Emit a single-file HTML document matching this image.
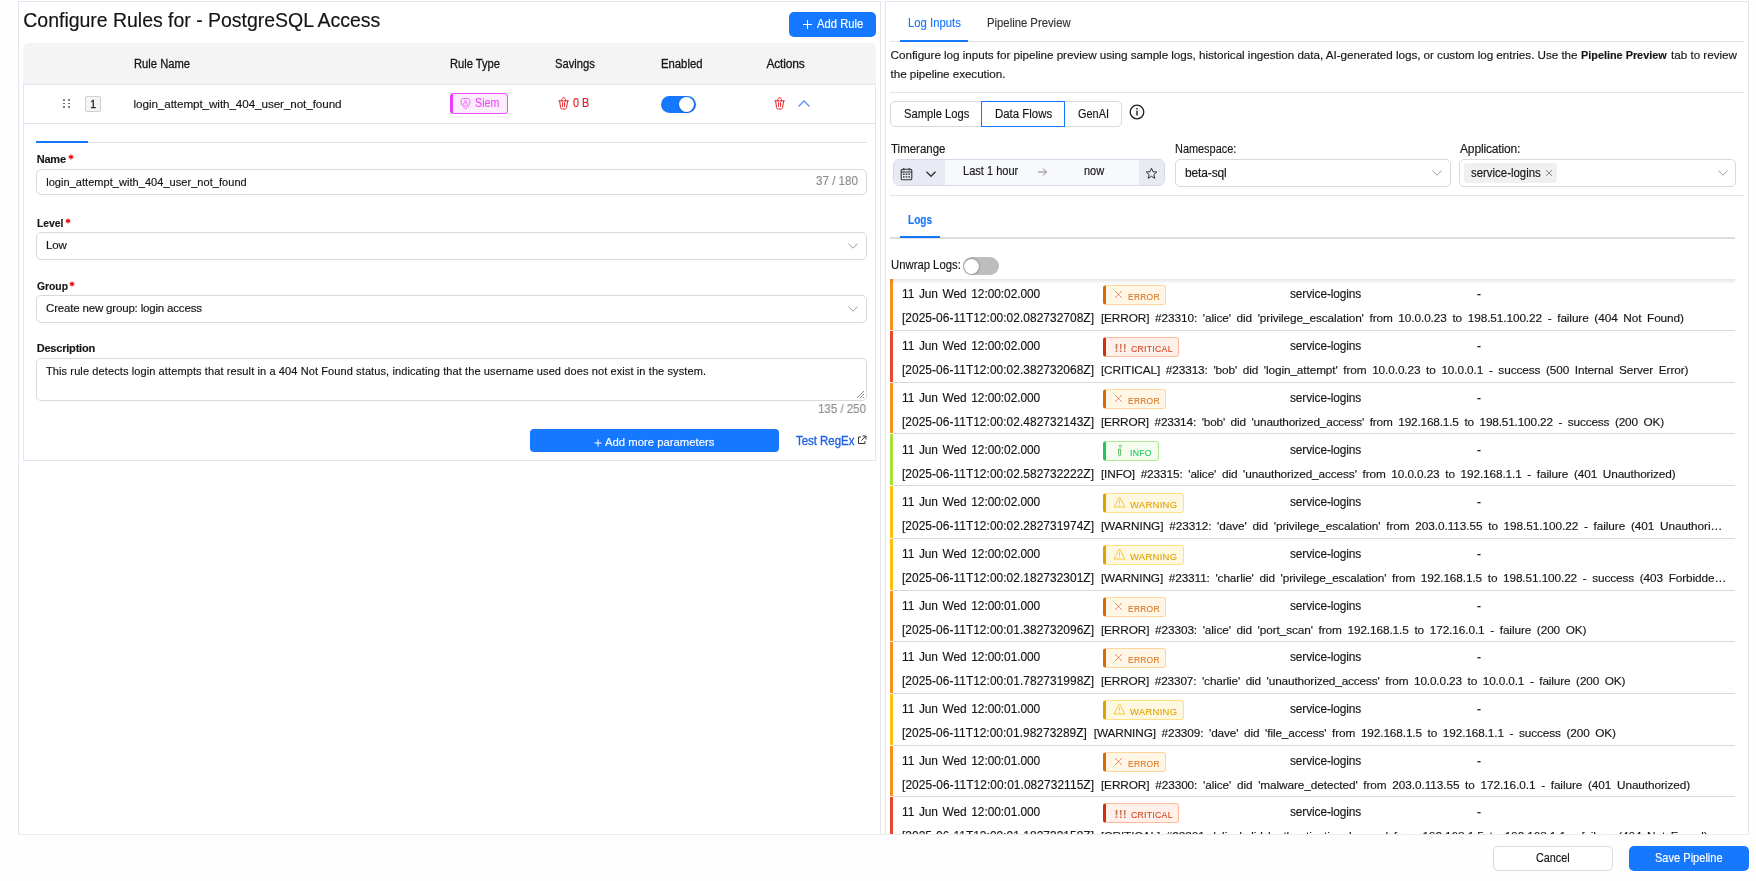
<!DOCTYPE html>
<html><head><meta charset="utf-8"><style>
html,body{margin:0;padding:0;}
body{width:1756px;height:881px;position:relative;overflow:hidden;background:#fefefe;font-family:"Liberation Sans", sans-serif;}
.tx{position:absolute;line-height:1;white-space:nowrap;-webkit-text-stroke:0.15px currentColor;}
.bp{display:inline-block;width:0;height:0;vertical-align:baseline;}
</style></head><body><div id="root" style="position:absolute;left:0;top:0;width:1756px;height:881px;overflow:hidden;will-change:transform"><div style="position:absolute;left:18px;top:1px;width:863px;height:834px;border:1px solid #e2e5ee;border-bottom:0;box-sizing:border-box;background:#fff"></div><div style="position:absolute;left:789px;top:12px;width:87px;height:25px;border-radius:5px;background:#1677ff"></div><svg style="position:absolute;left:802px;top:19px" width="11" height="11" viewBox="0 0 11 11"><path d="M5.5 1 V10 M1 5.5 H10" stroke="#fff" stroke-width="1.1"/></svg><div style="position:absolute;left:23px;top:43px;width:853px;height:41px;border-radius:6px 6px 0 0;background:#f4f4f4"></div><div style="position:absolute;left:23px;top:84px;width:853px;height:377px;border:1px solid #e2e6f0;box-sizing:border-box;"></div><div style="position:absolute;left:23px;top:123px;width:853px;height:1px;background:#e2e6f0"></div><div style="position:absolute;left:63.2px;top:99.2px;width:1.6px;height:1.6px;background:#555;border-radius:1px"></div><div style="position:absolute;left:63.2px;top:102.7px;width:1.6px;height:1.6px;background:#555;border-radius:1px"></div><div style="position:absolute;left:63.2px;top:106.2px;width:1.6px;height:1.6px;background:#555;border-radius:1px"></div><div style="position:absolute;left:68.2px;top:99.2px;width:1.6px;height:1.6px;background:#555;border-radius:1px"></div><div style="position:absolute;left:68.2px;top:102.7px;width:1.6px;height:1.6px;background:#555;border-radius:1px"></div><div style="position:absolute;left:68.2px;top:106.2px;width:1.6px;height:1.6px;background:#555;border-radius:1px"></div><div style="position:absolute;left:85px;top:96px;width:16px;height:15.5px;border:1px solid #cfcfcf;border-radius:2px;background:#f5f5f5;box-sizing:border-box"></div><div style="position:absolute;left:450px;top:93px;width:58px;height:21px;border:1px solid #f04cff;border-left:3px solid #ea3cfb;border-radius:3.5px;background:#fdeeff;box-sizing:border-box"></div><svg style="position:absolute;left:459px;top:97px" width="13" height="13" viewBox="0 0 13 13"><path d="M3.3 1.5 H9.7 L11 3.4 L10.6 7.8 L6.5 11.8 L2.4 7.8 L2 3.4 Z" fill="none" stroke="#f06bff" stroke-width="1" stroke-linejoin="round"/><circle cx="6.5" cy="4.5" r="1.1" fill="none" stroke="#f06bff" stroke-width="0.9"/><rect x="4.6" y="5.8" width="3.8" height="3" rx="0.6" fill="none" stroke="#f06bff" stroke-width="0.9"/></svg><svg style="position:absolute;left:557.5px;top:96.8px" width="12" height="13" viewBox="0 0 12 13"><path d="M0.8 3.9 H10.4 M3.6 3.9 C3.6 1.6 4.5 0.7 5.6 0.7 C6.7 0.7 7.6 1.6 7.6 3.9 M1.6 4 L2.6 10.6 C2.8 11.6 3.6 12.1 4.4 12.1 H6.8 C7.6 12.1 8.4 11.6 8.6 10.6 L9.6 4 M4.6 5.6 V9.4 M6.6 5.6 V9.4" fill="none" stroke="#e8141e" stroke-width="0.95" stroke-linecap="round"/></svg><div style="position:absolute;left:661px;top:96px;width:35px;height:17px;border-radius:9px;background:#1677ff"></div><div style="position:absolute;left:679px;top:97px;width:15px;height:15px;border-radius:50%;background:#fff;box-shadow:0 1px 2px rgba(0,0,0,.25)"></div><svg style="position:absolute;left:773.5px;top:96.8px" width="12" height="13" viewBox="0 0 12 13"><path d="M0.8 3.9 H10.4 M3.6 3.9 C3.6 1.6 4.5 0.7 5.6 0.7 C6.7 0.7 7.6 1.6 7.6 3.9 M1.6 4 L2.6 10.6 C2.8 11.6 3.6 12.1 4.4 12.1 H6.8 C7.6 12.1 8.4 11.6 8.6 10.6 L9.6 4 M4.6 5.6 V9.4 M6.6 5.6 V9.4" fill="none" stroke="#e8141e" stroke-width="0.95" stroke-linecap="round"/></svg><svg style="position:absolute;left:797px;top:98px" width="14" height="10" viewBox="0 0 14 10"><path d="M1.5 8.5 L7 3 L12.5 8.5" fill="none" stroke="#5b8ff9" stroke-width="1.4"/></svg><div style="position:absolute;left:36px;top:142px;width:831px;height:1px;background:#e0e0e0"></div><div style="position:absolute;left:36px;top:141px;width:52px;height:2px;background:#1677ff"></div><svg style="position:absolute;left:67.5px;top:153.7px" width="6" height="6" viewBox="0 0 6 6"><path d="M3 0.4 V5.6 M0.75 1.7 L5.25 4.3 M5.25 1.7 L0.75 4.3" stroke="#e60000" stroke-width="1.1"/></svg><div style="position:absolute;left:36px;top:169px;width:831px;height:26px;border:1px solid #d9d9d9;border-radius:5px;box-sizing:border-box"></div><svg style="position:absolute;left:64.7px;top:217.7px" width="6" height="6" viewBox="0 0 6 6"><path d="M3 0.4 V5.6 M0.75 1.7 L5.25 4.3 M5.25 1.7 L0.75 4.3" stroke="#e60000" stroke-width="1.1"/></svg><div style="position:absolute;left:36px;top:232px;width:831px;height:28px;border:1px solid #d9d9d9;border-radius:5px;box-sizing:border-box"></div><svg style="position:absolute;left:847px;top:242px" width="12" height="8" viewBox="0 0 12 8"><path d="M1.5 1.8 L6 6.2 L10.5 1.8" fill="none" stroke="#9a9a9a" stroke-width="1"/></svg><svg style="position:absolute;left:69.2px;top:280.8px" width="6" height="6" viewBox="0 0 6 6"><path d="M3 0.4 V5.6 M0.75 1.7 L5.25 4.3 M5.25 1.7 L0.75 4.3" stroke="#e60000" stroke-width="1.1"/></svg><div style="position:absolute;left:36px;top:295px;width:831px;height:28px;border:1px solid #d9d9d9;border-radius:5px;box-sizing:border-box"></div><svg style="position:absolute;left:847px;top:305px" width="12" height="8" viewBox="0 0 12 8"><path d="M1.5 1.8 L6 6.2 L10.5 1.8" fill="none" stroke="#9a9a9a" stroke-width="1"/></svg><div style="position:absolute;left:36px;top:358px;width:831px;height:43px;border:1px solid #d9d9d9;border-radius:5px;box-sizing:border-box"></div><svg style="position:absolute;left:855px;top:389px" width="10" height="10" viewBox="0 0 10 10"><path d="M9 2 L2 9 M9 5 L5 9 M9 8 L8 9" stroke="#777" stroke-width="0.9"/></svg><div style="position:absolute;left:530px;top:429px;width:249px;height:23px;border-radius:4px;background:#1677ff"></div><svg style="position:absolute;left:594px;top:439px" width="8" height="8" viewBox="0 0 8 8"><path d="M4 0.5 V7.5 M0.5 4 H7.5" stroke="#fff" stroke-width="1"/></svg><svg style="position:absolute;left:857px;top:435px" width="10" height="10" viewBox="0 0 10 10"><path d="M4 2 H1.5 V8.5 H8 V6 M5.5 1 H9 V4.5 M9 1 L4.5 5.5" fill="none" stroke="#333" stroke-width="1"/></svg><div style="position:absolute;left:885px;top:1px;width:864px;height:834px;border:1px solid #e2e5ee;border-bottom:0;box-sizing:border-box;background:#fff"></div><div style="position:absolute;left:890px;top:41px;width:854px;height:1px;background:#e0e0e0"></div><div style="position:absolute;left:900px;top:40px;width:68px;height:2px;background:#1677ff"></div><div style="position:absolute;left:890px;top:92px;width:854px;height:1px;background:#e3e3e3"></div><div style="position:absolute;left:890px;top:101px;width:232px;height:26px;border:1px solid #d9d9d9;border-radius:5px;box-sizing:border-box"></div><div style="position:absolute;left:981px;top:101px;width:84px;height:26px;border:1px solid #1677ff;box-sizing:border-box"></div><svg style="position:absolute;left:1129px;top:104px" width="16" height="16" viewBox="0 0 16 16"><circle cx="8" cy="8" r="6.8" fill="none" stroke="#1f1f1f" stroke-width="1.3"/><rect x="7.3" y="6.6" width="1.4" height="5" fill="#1f1f1f"/><circle cx="8" cy="4.6" r="0.85" fill="#1f1f1f"/></svg><div style="position:absolute;left:893px;top:159px;width:272px;height:27px;border:1px solid #d3d9e6;border-radius:6px;box-sizing:border-box;background:#f8f9fc;overflow:hidden"><div style="position:absolute;left:0;top:0;width:51px;height:25px;background:#e8ebf3"></div><div style="position:absolute;left:245px;top:0;width:26px;height:25px;background:#e8ebf3"></div></div><svg style="position:absolute;left:900px;top:167px" width="13" height="14" viewBox="0 0 13 14"><rect x="1.2" y="2.2" width="10.6" height="10.6" rx="1.2" fill="none" stroke="#333" stroke-width="1.1"/><path d="M1.2 5 H11.8 M3.8 1 V3.4 M9.2 1 V3.4" stroke="#333" stroke-width="1.1"/><g fill="#333"><rect x="3" y="6.5" width="1.6" height="1.4"/><rect x="5.7" y="6.5" width="1.6" height="1.4"/><rect x="8.4" y="6.5" width="1.6" height="1.4"/><rect x="3" y="9.2" width="1.6" height="1.4"/><rect x="5.7" y="9.2" width="1.6" height="1.4"/><rect x="8.4" y="9.2" width="1.6" height="1.4"/></g></svg><svg style="position:absolute;left:925px;top:169.5px" width="12" height="8" viewBox="0 0 12 8"><path d="M1.5 1.8 L6 6.2 L10.5 1.8" fill="none" stroke="#333" stroke-width="1.4"/></svg><svg style="position:absolute;left:1037px;top:167px" width="11" height="10" viewBox="0 0 11 10"><path d="M1 5 H9.5 M6 1.5 L9.5 5 L6 8.5" fill="none" stroke="#888" stroke-width="1"/></svg><svg style="position:absolute;left:1145px;top:167px" width="13" height="13" viewBox="0 0 13 13"><path d="M6.5 1.2 L8 4.7 L11.8 5 L8.9 7.5 L9.8 11.3 L6.5 9.3 L3.2 11.3 L4.1 7.5 L1.2 5 L5 4.7 Z" fill="none" stroke="#333" stroke-width="1" stroke-linejoin="round"/></svg><div style="position:absolute;left:1175px;top:159px;width:276px;height:28px;border:1px solid #d9d9d9;border-radius:5px;box-sizing:border-box"></div><svg style="position:absolute;left:1431px;top:169px" width="12" height="8" viewBox="0 0 12 8"><path d="M1.5 1.8 L6 6.2 L10.5 1.8" fill="none" stroke="#9a9a9a" stroke-width="1"/></svg><div style="position:absolute;left:1459px;top:159px;width:277px;height:28px;border:1px solid #d9d9d9;border-radius:5px;box-sizing:border-box"></div><div style="position:absolute;left:1464px;top:163px;width:93px;height:20px;border-radius:3px;background:#f0f0f0"></div><svg style="position:absolute;left:1545px;top:169px" width="8" height="8" viewBox="0 0 8 8"><path d="M1 1 L7 7 M7 1 L1 7" stroke="#8c8c8c" stroke-width="1"/></svg><svg style="position:absolute;left:1716.5px;top:169px" width="12" height="8" viewBox="0 0 12 8"><path d="M1.5 1.8 L6 6.2 L10.5 1.8" fill="none" stroke="#9a9a9a" stroke-width="1"/></svg><div style="position:absolute;left:890px;top:195px;width:854px;height:1px;background:#e3e3e3"></div><div style="position:absolute;left:890px;top:237px;width:845px;height:1.5px;background:#dcdcdc"></div><div style="position:absolute;left:900px;top:236px;width:40px;height:2px;background:#1677ff"></div><div style="position:absolute;left:963px;top:257px;width:36px;height:18px;border-radius:9px;background:#bdbdbd"></div><div style="position:absolute;left:964px;top:258.5px;width:15px;height:15px;border-radius:50%;background:#fff;box-shadow:0 0 1.5px 0.5px rgba(0,0,0,.35)"></div><div style="position:absolute;left:890px;top:279px;width:845px;height:555px;overflow:hidden"><div style="position:absolute;left:0;top:0px;width:3px;height:51px;background:#fb8c1e"></div><div style="position:absolute;left:3px;top:51px;width:842px;height:1px;background:#d9d9d9"></div><div style="position:absolute;left:213px;top:6px;width:63px;height:19.5px;border:1px solid #ffd59a;border-left:3px solid #d96a0a;border-radius:3px;background:#fff6e6;box-sizing:border-box"></div><svg style="position:absolute;left:224px;top:11px" width="9" height="9" viewBox="0 0 9 9"><path d="M1 1 L8 8 M8 1 L1 8" stroke="#f08050" stroke-width="0.9"/></svg><div style="position:absolute;left:0;top:52px;width:3px;height:51px;background:#e5482a"></div><div style="position:absolute;left:3px;top:103px;width:842px;height:1px;background:#d9d9d9"></div><div style="position:absolute;left:213px;top:58px;width:76px;height:19.5px;border:1px solid #ffb79b;border-left:3px solid #d32f0f;border-radius:3px;background:#fff0ea;box-sizing:border-box"></div><div style="position:absolute;left:0;top:104px;width:3px;height:50px;background:#fb8c1e"></div><div style="position:absolute;left:3px;top:154px;width:842px;height:1px;background:#d9d9d9"></div><div style="position:absolute;left:213px;top:110px;width:63px;height:19.5px;border:1px solid #ffd59a;border-left:3px solid #d96a0a;border-radius:3px;background:#fff6e6;box-sizing:border-box"></div><svg style="position:absolute;left:224px;top:115px" width="9" height="9" viewBox="0 0 9 9"><path d="M1 1 L8 8 M8 1 L1 8" stroke="#f08050" stroke-width="0.9"/></svg><div style="position:absolute;left:0;top:155px;width:3px;height:51px;background:#a8e03a"></div><div style="position:absolute;left:3px;top:206px;width:842px;height:1px;background:#d9d9d9"></div><div style="position:absolute;left:213px;top:162px;width:56px;height:19.5px;border:1px solid #aeea94;border-left:3px solid #22c55e;border-radius:3px;background:#f4fdf0;box-sizing:border-box"></div><svg style="position:absolute;left:225px;top:164px" width="9" height="14" viewBox="0 0 9 14"><circle cx="5.4" cy="3.2" r="1.1" fill="none" stroke="#6cc070" stroke-width="0.9"/><path d="M3.2 6.2 H5.6 V11.8 C5.6 12.5 5.1 12.8 4.6 12.8 C4 12.8 3.6 12.4 3.6 11.8 V6.4" fill="none" stroke="#5cb860" stroke-width="1"/></svg><div style="position:absolute;left:0;top:207px;width:3px;height:52px;background:#ffc107"></div><div style="position:absolute;left:3px;top:259px;width:842px;height:1px;background:#d9d9d9"></div><div style="position:absolute;left:213px;top:214px;width:81px;height:19.5px;border:1px solid #ffe08a;border-left:3px solid #e0a000;border-radius:3px;background:#fff8e1;box-sizing:border-box"></div><svg style="position:absolute;left:223px;top:217px" width="13" height="12" viewBox="0 0 13 12"><path d="M6.5 1 L12 11 H1 Z" fill="none" stroke="#f5c842" stroke-width="1" stroke-linejoin="round"/><path d="M6.5 4.2 V7.6" stroke="#f5c842" stroke-width="1"/><circle cx="6.5" cy="9.2" r="0.6" fill="#f5c842"/></svg><div style="position:absolute;left:0;top:260px;width:3px;height:51px;background:#ffc107"></div><div style="position:absolute;left:3px;top:311px;width:842px;height:1px;background:#d9d9d9"></div><div style="position:absolute;left:213px;top:266px;width:81px;height:19.5px;border:1px solid #ffe08a;border-left:3px solid #e0a000;border-radius:3px;background:#fff8e1;box-sizing:border-box"></div><svg style="position:absolute;left:223px;top:269px" width="13" height="12" viewBox="0 0 13 12"><path d="M6.5 1 L12 11 H1 Z" fill="none" stroke="#f5c842" stroke-width="1" stroke-linejoin="round"/><path d="M6.5 4.2 V7.6" stroke="#f5c842" stroke-width="1"/><circle cx="6.5" cy="9.2" r="0.6" fill="#f5c842"/></svg><div style="position:absolute;left:0;top:312px;width:3px;height:50px;background:#fb8c1e"></div><div style="position:absolute;left:3px;top:362px;width:842px;height:1px;background:#d9d9d9"></div><div style="position:absolute;left:213px;top:318px;width:63px;height:19.5px;border:1px solid #ffd59a;border-left:3px solid #d96a0a;border-radius:3px;background:#fff6e6;box-sizing:border-box"></div><svg style="position:absolute;left:224px;top:323px" width="9" height="9" viewBox="0 0 9 9"><path d="M1 1 L8 8 M8 1 L1 8" stroke="#f08050" stroke-width="0.9"/></svg><div style="position:absolute;left:0;top:363px;width:3px;height:51px;background:#fb8c1e"></div><div style="position:absolute;left:3px;top:414px;width:842px;height:1px;background:#d9d9d9"></div><div style="position:absolute;left:213px;top:369px;width:63px;height:19.5px;border:1px solid #ffd59a;border-left:3px solid #d96a0a;border-radius:3px;background:#fff6e6;box-sizing:border-box"></div><svg style="position:absolute;left:224px;top:374px" width="9" height="9" viewBox="0 0 9 9"><path d="M1 1 L8 8 M8 1 L1 8" stroke="#f08050" stroke-width="0.9"/></svg><div style="position:absolute;left:0;top:415px;width:3px;height:51px;background:#ffc107"></div><div style="position:absolute;left:3px;top:466px;width:842px;height:1px;background:#d9d9d9"></div><div style="position:absolute;left:213px;top:421px;width:81px;height:19.5px;border:1px solid #ffe08a;border-left:3px solid #e0a000;border-radius:3px;background:#fff8e1;box-sizing:border-box"></div><svg style="position:absolute;left:223px;top:424px" width="13" height="12" viewBox="0 0 13 12"><path d="M6.5 1 L12 11 H1 Z" fill="none" stroke="#f5c842" stroke-width="1" stroke-linejoin="round"/><path d="M6.5 4.2 V7.6" stroke="#f5c842" stroke-width="1"/><circle cx="6.5" cy="9.2" r="0.6" fill="#f5c842"/></svg><div style="position:absolute;left:0;top:467px;width:3px;height:50px;background:#fb8c1e"></div><div style="position:absolute;left:3px;top:517px;width:842px;height:1px;background:#d9d9d9"></div><div style="position:absolute;left:213px;top:473px;width:63px;height:19.5px;border:1px solid #ffd59a;border-left:3px solid #d96a0a;border-radius:3px;background:#fff6e6;box-sizing:border-box"></div><svg style="position:absolute;left:224px;top:478px" width="9" height="9" viewBox="0 0 9 9"><path d="M1 1 L8 8 M8 1 L1 8" stroke="#f08050" stroke-width="0.9"/></svg><div style="position:absolute;left:0;top:518px;width:3px;height:51px;background:#e5482a"></div><div style="position:absolute;left:3px;top:569px;width:842px;height:1px;background:#d9d9d9"></div><div style="position:absolute;left:213px;top:524px;width:76px;height:19.5px;border:1px solid #ffb79b;border-left:3px solid #d32f0f;border-radius:3px;background:#fff0ea;box-sizing:border-box"></div><div class="tx" id="t41" style="left:12.00px;top:10.00px;font-size:11.9px;font-weight:400;color:#161616;letter-spacing:-0.050px;word-spacing:1.4px;"><span class="bp" id="p41"></span>11 Jun Wed 12:00:02.000</div><div class="tx" id="t42" style="left:237.50px;top:13.01px;font-size:9.6px;font-weight:400;color:#dc7420;letter-spacing:0.300px;word-spacing:0px;transform:scaleX(0.8795);transform-origin:0 0;-webkit-text-stroke:0.1px #dc7420;"><span class="bp" id="p42"></span>ERROR</div><div class="tx" id="t43" style="left:400.00px;top:10.01px;font-size:11.9px;font-weight:400;color:#161616;letter-spacing:-0.108px;word-spacing:0px;"><span class="bp" id="p43"></span>service-logins</div><div class="tx" id="t44" style="left:587.00px;top:9.02px;font-size:12px;font-weight:400;color:#161616;letter-spacing:0.000px;word-spacing:0px;"><span class="bp" id="p44"></span>-</div><div class="tx" id="t45" style="left:12.00px;top:34.00px;font-size:11.9px;font-weight:400;color:#161616;letter-spacing:0.058px;word-spacing:0px;"><span class="bp" id="p45"></span>[2025-06-11T12:00:02.082732708Z]</div><div class="tx" id="t46" style="left:210.90px;top:34.01px;font-size:11.8px;font-weight:400;color:#161616;letter-spacing:-0.093px;word-spacing:2.5px;"><span class="bp" id="p46"></span>[ERROR] #23310: &#x27;alice&#x27; did &#x27;privilege_escalation&#x27; from 10.0.0.23 to 198.51.100.22 - failure (404 Not Found)</div><div class="tx" id="t47" style="left:12.00px;top:62.00px;font-size:11.9px;font-weight:400;color:#161616;letter-spacing:-0.050px;word-spacing:1.4px;"><span class="bp" id="p47"></span>11 Jun Wed 12:00:02.000</div><div class="tx" id="t48" style="left:224.80px;top:64.00px;font-size:10.5px;font-weight:700;color:#c9785f;letter-spacing:0.600px;word-spacing:0px;"><span class="bp" id="p48"></span>!!!</div><div class="tx" id="t49" style="left:240.90px;top:65.01px;font-size:9.6px;font-weight:400;color:#d8451b;letter-spacing:0.300px;word-spacing:0px;transform:scaleX(0.9062);transform-origin:0 0;-webkit-text-stroke:0.1px #d8451b;"><span class="bp" id="p49"></span>CRITICAL</div><div class="tx" id="t50" style="left:400.00px;top:62.01px;font-size:11.9px;font-weight:400;color:#161616;letter-spacing:-0.108px;word-spacing:0px;"><span class="bp" id="p50"></span>service-logins</div><div class="tx" id="t51" style="left:587.00px;top:61.02px;font-size:12px;font-weight:400;color:#161616;letter-spacing:0.000px;word-spacing:0px;"><span class="bp" id="p51"></span>-</div><div class="tx" id="t52" style="left:12.00px;top:86.00px;font-size:11.9px;font-weight:400;color:#161616;letter-spacing:0.058px;word-spacing:0px;"><span class="bp" id="p52"></span>[2025-06-11T12:00:02.382732068Z]</div><div class="tx" id="t53" style="left:210.90px;top:86.01px;font-size:11.8px;font-weight:400;color:#161616;letter-spacing:-0.104px;word-spacing:2.5px;"><span class="bp" id="p53"></span>[CRITICAL] #23313: &#x27;bob&#x27; did &#x27;login_attempt&#x27; from 10.0.0.23 to 10.0.0.1 - success (500 Internal Server Error)</div><div class="tx" id="t54" style="left:12.00px;top:114.00px;font-size:11.9px;font-weight:400;color:#161616;letter-spacing:-0.050px;word-spacing:1.4px;"><span class="bp" id="p54"></span>11 Jun Wed 12:00:02.000</div><div class="tx" id="t55" style="left:237.50px;top:117.01px;font-size:9.6px;font-weight:400;color:#dc7420;letter-spacing:0.300px;word-spacing:0px;transform:scaleX(0.8795);transform-origin:0 0;-webkit-text-stroke:0.1px #dc7420;"><span class="bp" id="p55"></span>ERROR</div><div class="tx" id="t56" style="left:400.00px;top:114.01px;font-size:11.9px;font-weight:400;color:#161616;letter-spacing:-0.108px;word-spacing:0px;"><span class="bp" id="p56"></span>service-logins</div><div class="tx" id="t57" style="left:587.00px;top:113.02px;font-size:12px;font-weight:400;color:#161616;letter-spacing:0.000px;word-spacing:0px;"><span class="bp" id="p57"></span>-</div><div class="tx" id="t58" style="left:12.00px;top:138.00px;font-size:11.9px;font-weight:400;color:#161616;letter-spacing:0.058px;word-spacing:0px;"><span class="bp" id="p58"></span>[2025-06-11T12:00:02.482732143Z]</div><div class="tx" id="t59" style="left:210.90px;top:138.01px;font-size:11.8px;font-weight:400;color:#161616;letter-spacing:-0.163px;word-spacing:2.5px;"><span class="bp" id="p59"></span>[ERROR] #23314: &#x27;bob&#x27; did &#x27;unauthorized_access&#x27; from 192.168.1.5 to 198.51.100.22 - success (200 OK)</div><div class="tx" id="t60" style="left:12.00px;top:166.00px;font-size:11.9px;font-weight:400;color:#161616;letter-spacing:-0.050px;word-spacing:1.4px;"><span class="bp" id="p60"></span>11 Jun Wed 12:00:02.000</div><div class="tx" id="t61" style="left:240.00px;top:169.01px;font-size:9.6px;font-weight:400;color:#22c55e;letter-spacing:0.300px;word-spacing:0px;transform:scaleX(0.9036);transform-origin:0 0;-webkit-text-stroke:0.1px #22c55e;"><span class="bp" id="p61"></span>INFO</div><div class="tx" id="t62" style="left:400.00px;top:166.01px;font-size:11.9px;font-weight:400;color:#161616;letter-spacing:-0.108px;word-spacing:0px;"><span class="bp" id="p62"></span>service-logins</div><div class="tx" id="t63" style="left:587.00px;top:165.02px;font-size:12px;font-weight:400;color:#161616;letter-spacing:0.000px;word-spacing:0px;"><span class="bp" id="p63"></span>-</div><div class="tx" id="t64" style="left:12.00px;top:190.00px;font-size:11.9px;font-weight:400;color:#161616;letter-spacing:0.058px;word-spacing:0px;"><span class="bp" id="p64"></span>[2025-06-11T12:00:02.582732222Z]</div><div class="tx" id="t65" style="left:210.90px;top:190.01px;font-size:11.8px;font-weight:400;color:#161616;letter-spacing:-0.106px;word-spacing:2.5px;"><span class="bp" id="p65"></span>[INFO] #23315: &#x27;alice&#x27; did &#x27;unauthorized_access&#x27; from 10.0.0.23 to 192.168.1.1 - failure (401 Unauthorized)</div><div class="tx" id="t66" style="left:12.00px;top:218.00px;font-size:11.9px;font-weight:400;color:#161616;letter-spacing:-0.050px;word-spacing:1.4px;"><span class="bp" id="p66"></span>11 Jun Wed 12:00:02.000</div><div class="tx" id="t67" style="left:240.00px;top:221.01px;font-size:9.6px;font-weight:400;color:#e0a200;letter-spacing:0.300px;word-spacing:0px;transform:scaleX(0.9849);transform-origin:0 0;-webkit-text-stroke:0.1px #e0a200;"><span class="bp" id="p67"></span>WARNING</div><div class="tx" id="t68" style="left:400.00px;top:218.01px;font-size:11.9px;font-weight:400;color:#161616;letter-spacing:-0.108px;word-spacing:0px;"><span class="bp" id="p68"></span>service-logins</div><div class="tx" id="t69" style="left:587.00px;top:217.02px;font-size:12px;font-weight:400;color:#161616;letter-spacing:0.000px;word-spacing:0px;"><span class="bp" id="p69"></span>-</div><div class="tx" id="t70" style="left:12.00px;top:242.00px;font-size:11.9px;font-weight:400;color:#161616;letter-spacing:0.058px;word-spacing:0px;"><span class="bp" id="p70"></span>[2025-06-11T12:00:02.282731974Z]</div><div class="tx" id="t71" style="left:210.90px;top:242.01px;font-size:11.8px;font-weight:400;color:#161616;letter-spacing:-0.064px;word-spacing:2.5px;"><span class="bp" id="p71"></span>[WARNING] #23312: &#x27;dave&#x27; did &#x27;privilege_escalation&#x27; from 203.0.113.55 to 198.51.100.22 - failure (401 Unauthori…</div><div class="tx" id="t72" style="left:12.00px;top:270.00px;font-size:11.9px;font-weight:400;color:#161616;letter-spacing:-0.050px;word-spacing:1.4px;"><span class="bp" id="p72"></span>11 Jun Wed 12:00:02.000</div><div class="tx" id="t73" style="left:240.00px;top:273.01px;font-size:9.6px;font-weight:400;color:#e0a200;letter-spacing:0.300px;word-spacing:0px;transform:scaleX(0.9849);transform-origin:0 0;-webkit-text-stroke:0.1px #e0a200;"><span class="bp" id="p73"></span>WARNING</div><div class="tx" id="t74" style="left:400.00px;top:270.01px;font-size:11.9px;font-weight:400;color:#161616;letter-spacing:-0.108px;word-spacing:0px;"><span class="bp" id="p74"></span>service-logins</div><div class="tx" id="t75" style="left:587.00px;top:269.02px;font-size:12px;font-weight:400;color:#161616;letter-spacing:0.000px;word-spacing:0px;"><span class="bp" id="p75"></span>-</div><div class="tx" id="t76" style="left:12.00px;top:294.00px;font-size:11.9px;font-weight:400;color:#161616;letter-spacing:0.058px;word-spacing:0px;"><span class="bp" id="p76"></span>[2025-06-11T12:00:02.182732301Z]</div><div class="tx" id="t77" style="left:210.90px;top:294.01px;font-size:11.8px;font-weight:400;color:#161616;letter-spacing:-0.105px;word-spacing:2.5px;"><span class="bp" id="p77"></span>[WARNING] #23311: &#x27;charlie&#x27; did &#x27;privilege_escalation&#x27; from 192.168.1.5 to 198.51.100.22 - success (403 Forbidde…</div><div class="tx" id="t78" style="left:12.00px;top:322.00px;font-size:11.9px;font-weight:400;color:#161616;letter-spacing:-0.050px;word-spacing:1.4px;"><span class="bp" id="p78"></span>11 Jun Wed 12:00:01.000</div><div class="tx" id="t79" style="left:237.50px;top:325.01px;font-size:9.6px;font-weight:400;color:#dc7420;letter-spacing:0.300px;word-spacing:0px;transform:scaleX(0.8795);transform-origin:0 0;-webkit-text-stroke:0.1px #dc7420;"><span class="bp" id="p79"></span>ERROR</div><div class="tx" id="t80" style="left:400.00px;top:322.01px;font-size:11.9px;font-weight:400;color:#161616;letter-spacing:-0.108px;word-spacing:0px;"><span class="bp" id="p80"></span>service-logins</div><div class="tx" id="t81" style="left:587.00px;top:321.02px;font-size:12px;font-weight:400;color:#161616;letter-spacing:0.000px;word-spacing:0px;"><span class="bp" id="p81"></span>-</div><div class="tx" id="t82" style="left:12.00px;top:346.00px;font-size:11.9px;font-weight:400;color:#161616;letter-spacing:0.058px;word-spacing:0px;"><span class="bp" id="p82"></span>[2025-06-11T12:00:01.382732096Z]</div><div class="tx" id="t83" style="left:210.90px;top:346.01px;font-size:11.8px;font-weight:400;color:#161616;letter-spacing:-0.096px;word-spacing:2.5px;"><span class="bp" id="p83"></span>[ERROR] #23303: &#x27;alice&#x27; did &#x27;port_scan&#x27; from 192.168.1.5 to 172.16.0.1 - failure (200 OK)</div><div class="tx" id="t84" style="left:12.00px;top:373.00px;font-size:11.9px;font-weight:400;color:#161616;letter-spacing:-0.050px;word-spacing:1.4px;"><span class="bp" id="p84"></span>11 Jun Wed 12:00:01.000</div><div class="tx" id="t85" style="left:237.50px;top:376.01px;font-size:9.6px;font-weight:400;color:#dc7420;letter-spacing:0.300px;word-spacing:0px;transform:scaleX(0.8795);transform-origin:0 0;-webkit-text-stroke:0.1px #dc7420;"><span class="bp" id="p85"></span>ERROR</div><div class="tx" id="t86" style="left:400.00px;top:373.01px;font-size:11.9px;font-weight:400;color:#161616;letter-spacing:-0.108px;word-spacing:0px;"><span class="bp" id="p86"></span>service-logins</div><div class="tx" id="t87" style="left:587.00px;top:372.02px;font-size:12px;font-weight:400;color:#161616;letter-spacing:0.000px;word-spacing:0px;"><span class="bp" id="p87"></span>-</div><div class="tx" id="t88" style="left:12.00px;top:397.00px;font-size:11.9px;font-weight:400;color:#161616;letter-spacing:0.058px;word-spacing:0px;"><span class="bp" id="p88"></span>[2025-06-11T12:00:01.782731998Z]</div><div class="tx" id="t89" style="left:210.90px;top:397.01px;font-size:11.8px;font-weight:400;color:#161616;letter-spacing:-0.140px;word-spacing:2.5px;"><span class="bp" id="p89"></span>[ERROR] #23307: &#x27;charlie&#x27; did &#x27;unauthorized_access&#x27; from 10.0.0.23 to 10.0.0.1 - failure (200 OK)</div><div class="tx" id="t90" style="left:12.00px;top:425.00px;font-size:11.9px;font-weight:400;color:#161616;letter-spacing:-0.050px;word-spacing:1.4px;"><span class="bp" id="p90"></span>11 Jun Wed 12:00:01.000</div><div class="tx" id="t91" style="left:240.00px;top:428.01px;font-size:9.6px;font-weight:400;color:#e0a200;letter-spacing:0.300px;word-spacing:0px;transform:scaleX(0.9849);transform-origin:0 0;-webkit-text-stroke:0.1px #e0a200;"><span class="bp" id="p91"></span>WARNING</div><div class="tx" id="t92" style="left:400.00px;top:425.01px;font-size:11.9px;font-weight:400;color:#161616;letter-spacing:-0.108px;word-spacing:0px;"><span class="bp" id="p92"></span>service-logins</div><div class="tx" id="t93" style="left:587.00px;top:424.02px;font-size:12px;font-weight:400;color:#161616;letter-spacing:0.000px;word-spacing:0px;"><span class="bp" id="p93"></span>-</div><div class="tx" id="t94" style="left:12.00px;top:449.00px;font-size:11.9px;font-weight:400;color:#161616;letter-spacing:0.044px;word-spacing:0px;"><span class="bp" id="p94"></span>[2025-06-11T12:00:01.98273289Z]</div><div class="tx" id="t95" style="left:203.80px;top:449.01px;font-size:11.8px;font-weight:400;color:#161616;letter-spacing:-0.117px;word-spacing:2.5px;"><span class="bp" id="p95"></span>[WARNING] #23309: &#x27;dave&#x27; did &#x27;file_access&#x27; from 192.168.1.5 to 192.168.1.1 - success (200 OK)</div><div class="tx" id="t96" style="left:12.00px;top:477.00px;font-size:11.9px;font-weight:400;color:#161616;letter-spacing:-0.050px;word-spacing:1.4px;"><span class="bp" id="p96"></span>11 Jun Wed 12:00:01.000</div><div class="tx" id="t97" style="left:237.50px;top:480.01px;font-size:9.6px;font-weight:400;color:#dc7420;letter-spacing:0.300px;word-spacing:0px;transform:scaleX(0.8795);transform-origin:0 0;-webkit-text-stroke:0.1px #dc7420;"><span class="bp" id="p97"></span>ERROR</div><div class="tx" id="t98" style="left:400.00px;top:477.01px;font-size:11.9px;font-weight:400;color:#161616;letter-spacing:-0.108px;word-spacing:0px;"><span class="bp" id="p98"></span>service-logins</div><div class="tx" id="t99" style="left:587.00px;top:476.02px;font-size:12px;font-weight:400;color:#161616;letter-spacing:0.000px;word-spacing:0px;"><span class="bp" id="p99"></span>-</div><div class="tx" id="t100" style="left:12.00px;top:501.00px;font-size:11.9px;font-weight:400;color:#161616;letter-spacing:0.087px;word-spacing:0px;"><span class="bp" id="p100"></span>[2025-06-11T12:00:01.082732115Z]</div><div class="tx" id="t101" style="left:210.90px;top:501.01px;font-size:11.8px;font-weight:400;color:#161616;letter-spacing:-0.078px;word-spacing:2.5px;"><span class="bp" id="p101"></span>[ERROR] #23300: &#x27;alice&#x27; did &#x27;malware_detected&#x27; from 203.0.113.55 to 172.16.0.1 - failure (401 Unauthorized)</div><div class="tx" id="t102" style="left:12.00px;top:528.00px;font-size:11.9px;font-weight:400;color:#161616;letter-spacing:-0.050px;word-spacing:1.4px;"><span class="bp" id="p102"></span>11 Jun Wed 12:00:01.000</div><div class="tx" id="t103" style="left:224.80px;top:530.00px;font-size:10.5px;font-weight:700;color:#c9785f;letter-spacing:0.600px;word-spacing:0px;"><span class="bp" id="p103"></span>!!!</div><div class="tx" id="t104" style="left:240.90px;top:531.01px;font-size:9.6px;font-weight:400;color:#d8451b;letter-spacing:0.300px;word-spacing:0px;transform:scaleX(0.9062);transform-origin:0 0;-webkit-text-stroke:0.1px #d8451b;"><span class="bp" id="p104"></span>CRITICAL</div><div class="tx" id="t105" style="left:400.00px;top:528.01px;font-size:11.9px;font-weight:400;color:#161616;letter-spacing:-0.108px;word-spacing:0px;"><span class="bp" id="p105"></span>service-logins</div><div class="tx" id="t106" style="left:587.00px;top:527.02px;font-size:12px;font-weight:400;color:#161616;letter-spacing:0.000px;word-spacing:0px;"><span class="bp" id="p106"></span>-</div><div class="tx" id="t107" style="left:12.00px;top:552.00px;font-size:11.9px;font-weight:400;color:#161616;letter-spacing:0.058px;word-spacing:0px;"><span class="bp" id="p107"></span>[2025-06-11T12:00:01.182732158Z]</div><div class="tx" id="t108" style="left:210.90px;top:552.01px;font-size:11.8px;font-weight:400;color:#161616;letter-spacing:-0.100px;word-spacing:2.5px;width:626.1px;overflow:hidden;text-overflow:ellipsis;"><span class="bp" id="p108"></span>[CRITICAL] #23301: &#x27;alice&#x27; did &#x27;authentication_bypass&#x27; from 192.168.1.5 to 192.168.1.1 - failure (404 Not Found)</div></div><div style="position:absolute;left:18px;top:834px;width:1731px;height:1px;background:#ececec"></div><div style="position:absolute;left:1493px;top:846px;width:120px;height:25px;border:1px solid #d9d9d9;border-radius:5px;box-sizing:border-box;background:#fff"></div><div style="position:absolute;left:1629px;top:846px;width:120px;height:25px;border-radius:5px;background:#1677ff"></div><div class="tx" id="t0" style="left:23.30px;top:11.01px;font-size:19.5px;font-weight:400;color:#141414;letter-spacing:-0.027px;word-spacing:0px;"><span class="bp" id="p0"></span>Configure Rules for - PostgreSQL Access</div><div class="tx" id="t1" style="left:816.90px;top:18.01px;font-size:12.3px;font-weight:400;color:#fff;letter-spacing:0.000px;word-spacing:0px;transform:scaleX(0.9151);transform-origin:0 0;"><span class="bp" id="p1"></span>Add Rule</div><div class="tx" id="t2" style="left:133.60px;top:58.01px;font-size:12px;font-weight:400;color:#161616;letter-spacing:0.000px;word-spacing:0px;transform:scaleX(0.9328);transform-origin:0 0;-webkit-text-stroke:0.3px #161616;"><span class="bp" id="p2"></span>Rule Name</div><div class="tx" id="t3" style="left:450.20px;top:58.01px;font-size:12px;font-weight:400;color:#161616;letter-spacing:0.000px;word-spacing:0px;transform:scaleX(0.9292);transform-origin:0 0;-webkit-text-stroke:0.3px #161616;"><span class="bp" id="p3"></span>Rule Type</div><div class="tx" id="t4" style="left:555.40px;top:58.01px;font-size:12px;font-weight:400;color:#161616;letter-spacing:0.000px;word-spacing:0px;transform:scaleX(0.9320);transform-origin:0 0;-webkit-text-stroke:0.3px #161616;"><span class="bp" id="p4"></span>Savings</div><div class="tx" id="t5" style="left:660.80px;top:58.01px;font-size:12px;font-weight:400;color:#161616;letter-spacing:0.000px;word-spacing:0px;transform:scaleX(0.9422);transform-origin:0 0;-webkit-text-stroke:0.3px #161616;"><span class="bp" id="p5"></span>Enabled</div><div class="tx" id="t6" style="left:766.40px;top:58.01px;font-size:12px;font-weight:400;color:#161616;letter-spacing:-0.177px;word-spacing:0px;-webkit-text-stroke:0.3px #161616;"><span class="bp" id="p6"></span>Actions</div><div class="tx" id="t7" style="left:90.20px;top:99.00px;font-size:10.5px;font-weight:400;color:#222;letter-spacing:0.000px;word-spacing:0px;-webkit-text-stroke:0.3px #222;"><span class="bp" id="p7"></span>1</div><div class="tx" id="t8" style="left:133.60px;top:98.01px;font-size:11.7px;font-weight:400;color:#161616;letter-spacing:-0.089px;word-spacing:0px;"><span class="bp" id="p8"></span>login_attempt_with_404_user_not_found</div><div class="tx" id="t9" style="left:475.40px;top:97.01px;font-size:12.3px;font-weight:400;color:#ea4ff6;letter-spacing:0.000px;word-spacing:0px;transform:scaleX(0.8705);transform-origin:0 0;"><span class="bp" id="p9"></span>Siem</div><div class="tx" id="t10" style="left:573.00px;top:97.01px;font-size:12px;font-weight:400;color:#e8141e;letter-spacing:0.000px;word-spacing:0px;transform:scaleX(0.8992);transform-origin:0 0;"><span class="bp" id="p10"></span>0 B</div><div class="tx" id="t11" style="left:36.70px;top:154.00px;font-size:11px;font-weight:700;color:#161616;letter-spacing:-0.190px;word-spacing:0px;"><span class="bp" id="p11"></span>Name</div><div class="tx" id="t12" style="left:46.20px;top:177.00px;font-size:11px;font-weight:400;color:#121212;letter-spacing:0.048px;word-spacing:0px;"><span class="bp" id="p12"></span>login_attempt_with_404_user_not_found</div><div class="tx" id="t13" style="left:815.60px;top:175.01px;font-size:12.3px;font-weight:400;color:#8c8c8c;letter-spacing:0.000px;word-spacing:0px;transform:scaleX(0.9448);transform-origin:0 0;"><span class="bp" id="p13"></span>37 / 180</div><div class="tx" id="t14" style="left:36.70px;top:218.00px;font-size:11px;font-weight:700;color:#161616;letter-spacing:0.000px;word-spacing:0px;transform:scaleX(0.9417);transform-origin:0 0;"><span class="bp" id="p14"></span>Level</div><div class="tx" id="t15" style="left:46.00px;top:240.01px;font-size:11.5px;font-weight:400;color:#121212;letter-spacing:-0.205px;word-spacing:0px;"><span class="bp" id="p15"></span>Low</div><div class="tx" id="t16" style="left:36.70px;top:281.01px;font-size:11px;font-weight:700;color:#161616;letter-spacing:0.000px;word-spacing:0px;transform:scaleX(0.9394);transform-origin:0 0;"><span class="bp" id="p16"></span>Group</div><div class="tx" id="t17" style="left:46.00px;top:303.00px;font-size:11.5px;font-weight:400;color:#121212;letter-spacing:-0.176px;word-spacing:0px;"><span class="bp" id="p17"></span>Create new group: login access</div><div class="tx" id="t18" style="left:36.70px;top:343.01px;font-size:11px;font-weight:700;color:#161616;letter-spacing:-0.202px;word-spacing:0px;"><span class="bp" id="p18"></span>Description</div><div class="tx" id="t19" style="left:46.00px;top:366.01px;font-size:11px;font-weight:400;color:#121212;letter-spacing:0.107px;word-spacing:0px;"><span class="bp" id="p19"></span>This rule detects login attempts that result in a 404 Not Found status, indicating that the username used does not exist in the system.</div><div class="tx" id="t20" style="left:817.70px;top:403.01px;font-size:12.3px;font-weight:400;color:#8c8c8c;letter-spacing:0.000px;word-spacing:0px;transform:scaleX(0.9357);transform-origin:0 0;"><span class="bp" id="p20"></span>135 / 250</div><div class="tx" id="t21" style="left:605.00px;top:437.01px;font-size:11.8px;font-weight:400;color:#fff;letter-spacing:0.000px;word-spacing:0px;transform:scaleX(0.9589);transform-origin:0 0;"><span class="bp" id="p21"></span>Add more parameters</div><div class="tx" id="t22" style="left:795.60px;top:435.02px;font-size:12.2px;font-weight:400;color:#1f62e0;letter-spacing:0.000px;word-spacing:0px;transform:scaleX(0.9370);transform-origin:0 0;-webkit-text-stroke:0.35px #1f62e0;"><span class="bp" id="p22"></span>Test RegEx</div><div class="tx" id="t23" style="left:907.60px;top:17.00px;font-size:12.5px;font-weight:400;color:#1677ff;letter-spacing:0.000px;word-spacing:0px;transform:scaleX(0.9043);transform-origin:0 0;"><span class="bp" id="p23"></span>Log Inputs</div><div class="tx" id="t24" style="left:987.40px;top:17.00px;font-size:12.5px;font-weight:400;color:#333;letter-spacing:0.000px;word-spacing:0px;transform:scaleX(0.9045);transform-origin:0 0;"><span class="bp" id="p24"></span>Pipeline Preview</div><div class="tx" id="t25" style="left:890.60px;top:49.00px;font-size:11.7px;font-weight:400;color:#161616;letter-spacing:-0.046px;word-spacing:0px;"><span class="bp" id="p25"></span>Configure log inputs for pipeline preview using sample logs, historical ingestion data, AI-generated logs, or custom log entries. Use the</div><div class="tx" id="t26" style="left:1581.30px;top:49.00px;font-size:11.7px;font-weight:700;color:#161616;letter-spacing:0.000px;word-spacing:0px;transform:scaleX(0.9290);transform-origin:0 0;"><span class="bp" id="p26"></span>Pipeline Preview</div><div class="tx" id="t27" style="left:1671.00px;top:49.00px;font-size:11.7px;font-weight:400;color:#161616;letter-spacing:-0.022px;word-spacing:0px;"><span class="bp" id="p27"></span>tab to review</div><div class="tx" id="t28" style="left:890.60px;top:68.00px;font-size:11.7px;font-weight:400;color:#161616;letter-spacing:-0.069px;word-spacing:0px;"><span class="bp" id="p28"></span>the pipeline execution.</div><div class="tx" id="t29" style="left:903.60px;top:108.01px;font-size:12px;font-weight:400;color:#161616;letter-spacing:0.000px;word-spacing:0px;transform:scaleX(0.9337);transform-origin:0 0;"><span class="bp" id="p29"></span>Sample Logs</div><div class="tx" id="t30" style="left:994.60px;top:108.01px;font-size:12px;font-weight:400;color:#161616;letter-spacing:0.000px;word-spacing:0px;transform:scaleX(0.9528);transform-origin:0 0;"><span class="bp" id="p30"></span>Data Flows</div><div class="tx" id="t31" style="left:1077.60px;top:108.01px;font-size:12px;font-weight:400;color:#161616;letter-spacing:0.000px;word-spacing:0px;transform:scaleX(0.9109);transform-origin:0 0;"><span class="bp" id="p31"></span>GenAI</div><div class="tx" id="t32" style="left:890.60px;top:143.01px;font-size:12px;font-weight:400;color:#161616;letter-spacing:0.000px;word-spacing:0px;transform:scaleX(0.9557);transform-origin:0 0;"><span class="bp" id="p32"></span>Timerange</div><div class="tx" id="t33" style="left:1175.20px;top:143.01px;font-size:12px;font-weight:400;color:#161616;letter-spacing:0.000px;word-spacing:0px;transform:scaleX(0.9098);transform-origin:0 0;"><span class="bp" id="p33"></span>Namespace:</div><div class="tx" id="t34" style="left:1460.00px;top:143.01px;font-size:12px;font-weight:400;color:#161616;letter-spacing:-0.150px;word-spacing:0px;"><span class="bp" id="p34"></span>Application:</div><div class="tx" id="t35" style="left:962.60px;top:165.02px;font-size:12px;font-weight:400;color:#161616;letter-spacing:0.000px;word-spacing:0px;transform:scaleX(0.9209);transform-origin:0 0;"><span class="bp" id="p35"></span>Last 1 hour</div><div class="tx" id="t36" style="left:1083.60px;top:165.01px;font-size:12px;font-weight:400;color:#161616;letter-spacing:0.000px;word-spacing:0px;transform:scaleX(0.9130);transform-origin:0 0;"><span class="bp" id="p36"></span>now</div><div class="tx" id="t37" style="left:1184.90px;top:167.01px;font-size:12px;font-weight:400;color:#161616;letter-spacing:-0.115px;word-spacing:0px;"><span class="bp" id="p37"></span>beta-sql</div><div class="tx" id="t38" style="left:1471.20px;top:167.01px;font-size:12px;font-weight:400;color:#161616;letter-spacing:0.000px;word-spacing:0px;transform:scaleX(0.9515);transform-origin:0 0;"><span class="bp" id="p38"></span>service-logins</div><div class="tx" id="t39" style="left:907.90px;top:214.02px;font-size:12px;font-weight:700;color:#1677ff;letter-spacing:0.000px;word-spacing:0px;transform:scaleX(0.8371);transform-origin:0 0;font-weight:600;"><span class="bp" id="p39"></span>Logs</div><div class="tx" id="t40" style="left:890.60px;top:259.01px;font-size:12px;font-weight:400;color:#161616;letter-spacing:0.000px;word-spacing:0px;transform:scaleX(0.9426);transform-origin:0 0;"><span class="bp" id="p40"></span>Unwrap Logs:</div><div class="tx" id="t109" style="left:1536.30px;top:852.02px;font-size:12px;font-weight:400;color:#161616;letter-spacing:0.000px;word-spacing:0px;transform:scaleX(0.9020);transform-origin:0 0;"><span class="bp" id="p109"></span>Cancel</div><div class="tx" id="t110" style="left:1655.30px;top:852.01px;font-size:12px;font-weight:400;color:#fff;letter-spacing:0.000px;word-spacing:0px;transform:scaleX(0.9211);transform-origin:0 0;"><span class="bp" id="p110"></span>Save Pipeline</div><div style="position:absolute;left:890px;top:279px;width:845px;height:5px;background:linear-gradient(to bottom, rgba(0,0,0,0.10), rgba(0,0,0,0))"></div></div></body></html>
